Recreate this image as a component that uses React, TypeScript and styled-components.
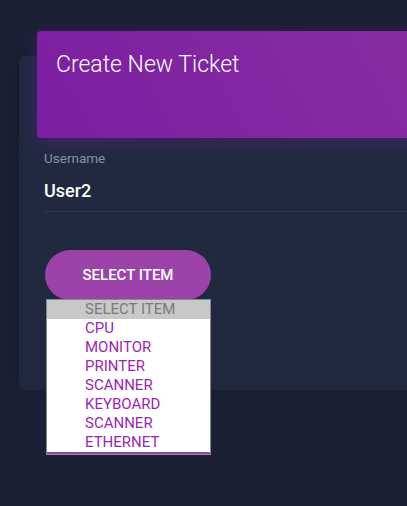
import React from "react";
import styled, { createGlobalStyle } from "styled-components";

const Global = createGlobalStyle`
  html, body { margin: 0; padding: 0; background: #1b2034; overflow: hidden; }
  body { font-family: Roboto, "Liberation Sans", sans-serif; }
`;

const Page = styled.div`
  width: 407px;
  height: 506px;
  padding: 56px 0 0 19px;
  box-sizing: border-box;
  overflow: hidden;
`;

const Card = styled.div`
  width: 420px;
  height: 334px;
  background: #212941;
  border-radius: 6px;
  box-shadow: -4px 0 14px rgba(0, 0, 0, 0.15);
  display: flex;
  flex-direction: column;
`;

const Header = styled.div`
  margin: -25px 0 0 18px;
  height: 107px;
  border-radius: 4px;
  background: linear-gradient(60deg, #7b1fa2, #8a2ca0);
  box-shadow: 0 4px 18px rgba(123, 31, 162, 0.35);
  padding: 20px 19px 0;
  box-sizing: border-box;
`;

const Title = styled.h2`
  margin: 0;
  font-weight: 300;
  font-size: 23px;
  line-height: 27px;
  color: #ffffff;
`;

const Form = styled.div`
  padding: 12px 0 0 25px;
  display: flex;
  flex-direction: column;
`;

const Label = styled.label`
  font-size: 13.5px;
  line-height: 16px;
  color: #8a92a6;
`;

const Value = styled.div`
  margin-top: 14px;
  font-size: 18px;
  font-weight: 500;
  line-height: 22px;
  color: #ffffff;
  padding-bottom: 9px;
  border-bottom: 1px solid #2e3650;
`;

const SelectWrap = styled.div`
  position: relative;
  margin-top: 38px;
  margin-left: 1px;
  width: 166px;
`;

const SelectButton = styled.button`
  width: 166px;
  height: 50px;
  border: none;
  border-radius: 25px;
  background: #9b43a8;
  color: #ffffff;
  font-family: Roboto, "Liberation Sans", sans-serif;
  font-size: 15px;
  font-weight: 500;
  padding: 0;
`;

const List = styled.ul`
  position: absolute;
  left: 1px;
  top: 49px;
  width: 165px;
  margin: 0;
  padding: 0 0 2px;
  list-style: none;
  background: #ffffff;
  border: 1px solid #8a8a8a;
  box-sizing: border-box;
  box-shadow: inset 0 -2px 0 #9b43a8;
`;

const Option = styled.li<{ $selected?: boolean }>`
  height: 19px;
  line-height: 19px;
  padding-left: 38px;
  font-size: 15px;
  color: ${(p) => (p.$selected ? "#7a7a7a" : "#9c27b0")};
  background: ${(p) => (p.$selected ? "#c8c8c8" : "transparent")};
`;

const items = ["CPU", "MONITOR", "PRINTER", "SCANNER", "KEYBOARD", "SCANNER", "ETHERNET"];

export default function App() {
  return (
    <>
      <Global />
      <Page>
        <Card>
          <Header>
            <Title>Create New Ticket</Title>
          </Header>
          <Form>
            <Label>Username</Label>
            <Value>User2</Value>
            <SelectWrap>
              <SelectButton>SELECT ITEM</SelectButton>
              <List>
                <Option $selected>SELECT ITEM</Option>
                {items.map((it, i) => (
                  <Option key={i}>{it}</Option>
                ))}
              </List>
            </SelectWrap>
          </Form>
        </Card>
      </Page>
    </>
  );
}
